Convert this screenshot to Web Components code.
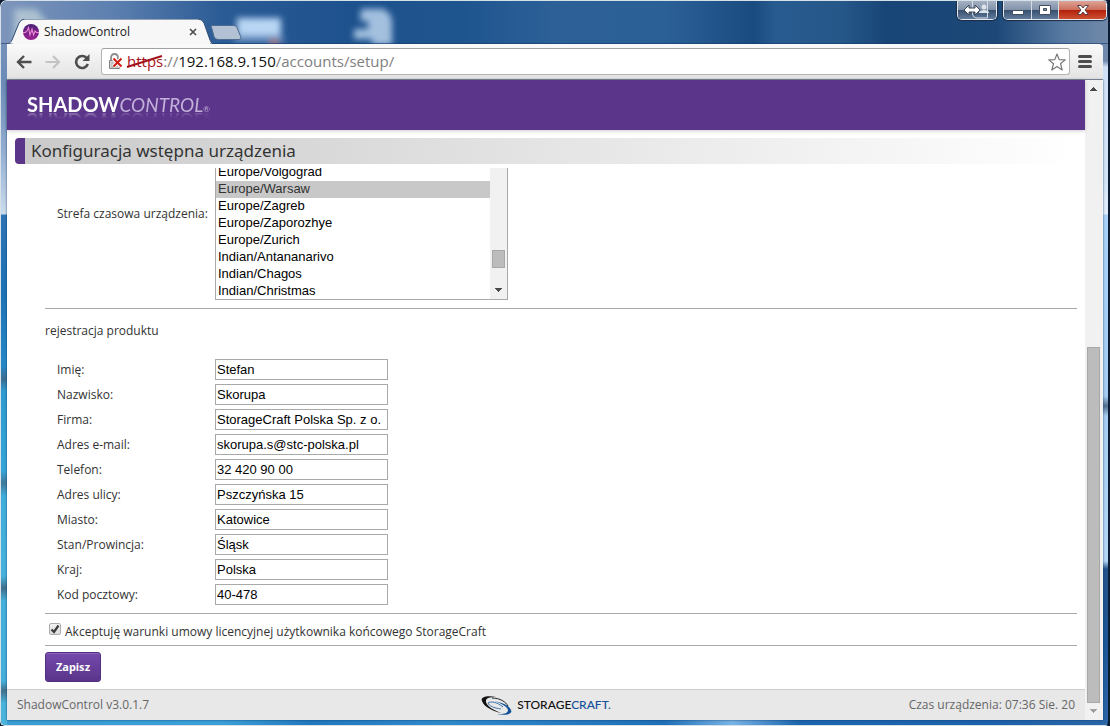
<!DOCTYPE html>
<html lang="pl">
<head>
<meta charset="utf-8">
<title>ShadowControl</title>
<style>
  html, body { height: 100%; margin: 0; }
  body { font-family: "Open Sans", "Trebuchet MS", sans-serif; font-size: 12px; line-height: 16px; color: #333; background: #0b1c33; overflow: hidden; }
</style>
</head>
<body>
<browser-window>
  <tab-strip slot="strip"></tab-strip>
  <tool-bar slot="toolbar"></tool-bar>
  <setup-page></setup-page>
</browser-window>

<script>
const define = (name, html, setup) => customElements.define(name, class extends HTMLElement {
  connectedCallback() {
    if (this.shadowRoot) return;
    const root = this.attachShadow({ mode: 'open' });
    const tpl = document.createElement('template');
    tpl.innerHTML = html;
    root.append(tpl.content.cloneNode(true));
    if (setup) setup(this, root);
  }
});

/* ---------- window frame ---------- */
define('browser-window', `
<style>
  :host { display: block; height: 100%; }
  .frame {
    box-sizing: border-box; height: 100%; display: flex; flex-direction: column; position: relative;
    border: 1px solid #d5e0e8; border-radius: 7px 7px 5px 5px; overflow: hidden;
    border-right: 2px solid #0b1c33;
    padding: 0 5px 5px 6px;
    background:
      linear-gradient(#7089ad 0, #7089ad 60px, #cfe0f5 66px, #d4e5f8 180px, #e4eef9 213px, #a9d1f6 214px, #a6cdf0 395px, #53708f 405px, #a6cdf0 415px, #b5d6f5 560px, #25528a 568px, #1e5796 640px, #2a66a8 100%) right / 6px 100% no-repeat,
      linear-gradient(#7d95bb 0, #6d8bb8 80px, #93aed0 150px, #cbdcec 213px, #2f74b5 214px, #1e72b4 290px, #2688c6 365px, #3d6d92 378px, #2f9bd0 390px, #36a5d6 470px, #41789a 482px, #40aedb 495px, #46b2dc 575px, #416f8e 587px, #45b0da 600px, #45afd9 680px, #44708c 690px, #49b3dc 702px) left / 6px 100% no-repeat,
      linear-gradient(90deg, #3a9ed5, #3b9fd8 20%, #2278bd 28%, #2f8acb 40%, #1f70b8 60%, #79b4e6 66%, #1c66ae 72%, #1d61aa 90%, #2a66a8) bottom / 100% 6px no-repeat,
      #1f548f;
  }
  .view { flex: 1; min-height: 0; display: flex; border-right: 1px solid #f4f4f4; box-shadow: 0 0 2px #0a2f5acc; background: #fff; position: relative; }
  .page { flex: 1; min-width: 0; }
  ::slotted(*) { position: relative; }
</style>
<div class="frame">
  <slot name="strip"></slot>
  <slot name="toolbar"></slot>
  <div class="view">
    <div class="page"><slot></slot></div>
    <scroll-bar start="250" size="355" dim></scroll-bar>
  </div>
</div>`);

/* ---------- classic scroll bar: start, size and rest are flex shares of the track ---------- */
define('scroll-bar', `
<style>
  :host { flex: none; width: 17px; background: #f1f1f1; display: flex; flex-direction: column; align-items: center; }
  svg { flex: none; display: block; width: 17px; height: 17px; fill: #4a4a4a; }
  :host([dim]) .down { fill: #a0a0a0; }
  :host([open-top]) .up { display: none; }
  .track { flex: 1; width: 13px; display: flex; flex-direction: column; }
  .thumb { box-sizing: border-box; background: #bcbcbc; border: 1px solid #a8a8a8; }
</style>
<svg class="up" viewBox="0 0 17 17" shape-rendering="crispEdges"><path d="M5 11h7L8.500 7z"/></svg>
<div class="track"><div class="before"></div><div class="thumb"></div><div class="after"></div></div>
<svg class="down" viewBox="0 0 17 17" shape-rendering="crispEdges"><path d="M5 6h7L8.500 10z"/></svg>`,
(host, root) => {
  const start = +host.getAttribute('start'), size = +host.getAttribute('size');
  const rest = +(host.getAttribute('rest') || 0);
  root.querySelector('.before').style.flex = start;
  root.querySelector('.thumb').style.flex = size;
  root.querySelector('.after').style.flex = rest;
});

/* ---------- title bar ---------- */
define('tab-strip', `
<style>
  :host { display: block; height: 43px; margin: 0 -5px 0 -6px; font: 12px/16px "Open Sans", "Segoe UI", sans-serif; color: #222; }
  .bar { height: 100%; position: relative; display: flex; justify-content: space-between; align-items: flex-start; }
  .wall { position: absolute; inset: 0; width: 100%; height: 100%; }
  .tabs { position: relative; display: flex; align-items: flex-end; height: 100%; padding-left: 6px; }
  .tab { position: relative; width: 206px; height: 25px; box-sizing: border-box; padding: 0 15px 0 16px; display: flex; align-items: center; gap: 5px; }
  .shape { position: absolute; left: 0; bottom: 0; }
  .tab > *:not(.shape) { position: relative; }
  .name { flex: 1; }
  button { all: unset; display: grid; place-items: center; }
  .close { width: 10px; height: 10px; }
  .new { width: 32px; height: 15px; margin: 0 0 4px -3px; }
  .controls { position: relative; display: flex; gap: 6px; padding-right: 1px; }
  .group { display: flex; box-sizing: border-box; height: 19px; border: 1px solid #e3e9ef; border-top: 0; border-radius: 0 0 5px 5px; overflow: hidden; box-shadow: 0 0 1px 1px #1b2c44; }
  .group button { height: 18px; background: linear-gradient(#a5b1c2 0, #8091a9 50%, #38506f 52%, #627b9b 100%); border-right: 1px solid #d5dce5; }
  .group button:last-child { border-right: 0; }
  .users { width: 38px; }
  .min { width: 27px; } .max { width: 26px; } .exit { width: 47px; }
  .group .exit { background: linear-gradient(#dda497 0, #cd6f5c 48%, #b3210c 52%, #cd5031 100%); }
</style>
<div class="bar">
  <svg class="wall" preserveAspectRatio="xMaxYMin slice" viewBox="0 0 1108 43">
    <defs>
      <linearGradient id="sky"><stop offset="0" stop-color="#7d95bb"/><stop offset=".1" stop-color="#5d80b0"/><stop offset=".2" stop-color="#2b5b95"/><stop offset=".32" stop-color="#1d518d"/><stop offset=".42" stop-color="#1f558f"/><stop offset=".5" stop-color="#2c6097"/><stop offset=".6" stop-color="#2b6097"/><stop offset=".68" stop-color="#1a4b80"/><stop offset=".7" stop-color="#285b90"/><stop offset=".76" stop-color="#265789"/><stop offset=".8" stop-color="#174576"/><stop offset=".9" stop-color="#1d4878"/><stop offset=".96" stop-color="#587aa2"/><stop offset="1" stop-color="#7089a9"/></linearGradient>
      <filter id="soft" x="-30%" y="-30%" width="160%" height="160%"><feGaussianBlur stdDeviation="3"/></filter>
    </defs>
    <rect width="1108" height="43" fill="url(#sky)"/>
    <g filter="url(#soft)">
      <path d="M14 8h22l12 14v25H14z" fill="#c5d5da" opacity=".7"/>
      <path d="M237 17h44v18h-44z" fill="#b8d6f4"/>
      <path d="M234 36h50v5h-50z" fill="#6c93c2"/>
      <circle cx="274" cy="42" r="5" fill="#a0707c"/>
      <path d="M361 8h22q9 4 9 14v22h-20v-6h-18v-10h14v-8h-8z" fill="#a3c0df"/>
    </g>
    <path d="M0 42.500h1108" stroke="#173d69" opacity=".6"/>
  </svg>
  <div class="tabs">
    <div class="tab">
      <svg class="shape" width="206" height="25" viewBox="0 0 206 25"><path d="M0 25c2 0 4-2 5-4L12 4q2-4 6-4h173q4 0 6 4l6 17q1 3 3 4z" fill="#f7f7f7" stroke="#304d74" stroke-width="1"/><path d="M7 24h196v1H4z" fill="#f7f7f7"/></svg>
      <svg width="16" height="16" viewBox="0 0 16 16"><defs><linearGradient id="pg" x2="0" y2="1"><stop stop-color="#4b2379"/><stop offset="1" stop-color="#9b2193"/></linearGradient></defs><circle cx="8" cy="8" r="8" fill="url(#pg)"/><path d="M0 8.500h2.500L4 7l1.500-3.500L7 11l2-6 1.500 6L12 7l1.500 1.500H16" fill="none" stroke="#ee86d5" stroke-width="1.100"/></svg>
      <span class="name">ShadowControl</span>
      <button class="close" aria-label="Zamknij kartę"><svg width="8" height="8" viewBox="0 0 8 8"><path d="M1 1l6 6M7 1L1 7" stroke="#4a4a4a" stroke-width="1.600"/></svg></button>
    </div>
    <button class="new" aria-label="Nowa karta"><svg width="32" height="15" viewBox="0 0 32 15"><path d="M1 .5h23q2 0 3 2l4 10q0 2-2 2H8q-3 0-4-3z" fill="#b2c1d4" stroke="#4d6a8f"/></svg></button>
  </div>
  <div class="controls">
    <div class="group"><button class="users" aria-label="Użytkownik"><svg width="38" height="18" viewBox="0 0 38 18"><path d="M14.500 0v12q0 5 5 5h10V0" fill="none" stroke="#d5dce5"/><circle cx="26" cy="6" r="2.500" fill="#dde3ea"/><path d="M21 12q0-3 5-3t5 3z" fill="#dde3ea"/><path d="M6 9l5-5v3h6V4l5 5-5 5v-3h-6v3z" fill="#fff" stroke="#3b4656"/></svg></button></div>
    <div class="group">
      <button class="min" aria-label="Minimalizuj"><svg width="14" height="14" viewBox="0 0 14 14"><path d="M1.500 7.500h11v4h-11z" fill="#fff" stroke="#434f61"/></svg></button>
      <button class="max" aria-label="Maksymalizuj"><svg width="14" height="12" viewBox="0 0 14 12"><path d="M1.500 1.500h11v9h-11zM5.500 4.500v2h3v-2z" fill="#fff" fill-rule="evenodd" stroke="#434f61"/></svg></button>
      <button class="exit" aria-label="Zamknij"><svg width="14" height="12" viewBox="0 0 14 12"><path d="M1.500 1.500h3.500l2 2.500 2-2.500h3.500L9 6l3.500 4.500H9L7 8l-2 2.500H1.500L5 6z" fill="#fff" stroke="#564049"/></svg></button>
    </div>
  </div>
</div>`);

/* ---------- navigation bar ---------- */
define('tool-bar', `
<style>
  :host { display: flex; box-sizing: border-box; height: 36px; align-items: center; padding: 0 8px 0 7px; background: linear-gradient(#fafafa, #e3e3e3); border-bottom: 1px solid #a09da5; border-radius: 0 4px 0 0; font: 15px/20px "Open Sans", "Segoe UI", sans-serif; }
  button { all: unset; display: grid; place-items: center; width: 20px; height: 20px; }
  .nav { display: flex; gap: 9px; }
  .omni { flex: 1; display: flex; align-items: center; box-sizing: border-box; height: 27px; margin: 0 5px 0 9px; padding: 0 2px 0 5px; border: 1px solid #b4b4b4; border-top-color: #a2a2a2; border-radius: 3px; background: #fff; gap: 3px; }
  .url { flex: 1; color: #808080; white-space: nowrap; padding-bottom: 2px; }
  .scheme { position: relative; color: #a5131b; }
  .scheme svg { position: absolute; left: -1px; top: 0; width: 38px; height: 20px; }
  .host { color: #111; }
</style>
<div class="nav">
  <button aria-label="Wstecz"><svg width="16" height="14" viewBox="0 0 16 14"><path d="M15.500 7H2M8 1L2 7l6 6" fill="none" stroke="#4e4e4e" stroke-width="2.400"/></svg></button>
  <button aria-label="Dalej"><svg width="16" height="14" viewBox="0 0 16 14"><path d="M.5 7H14M8 1l6 6-6 6" fill="none" stroke="#c3c3c3" stroke-width="2.200"/></svg></button>
  <button aria-label="Odśwież"><svg width="16" height="16" viewBox="0 0 16 16"><path d="M13 4.500A6 6 0 1 0 13.800 10" fill="none" stroke="#4e4e4e" stroke-width="2.600"/><path d="M15.500 0v7h-7z" fill="#4e4e4e"/></svg></button>
</div>
<div class="omni">
  <svg width="17" height="18" viewBox="0 0 17 18"><path d="M4 8V5q0-4 3.500-4T11 5v3" fill="none" stroke="#8e8e8e" stroke-width="1.800"/><path d="M2.500 7.500h10v8h-10z" fill="#d8d8d8" stroke="#808080"/><path d="M4 10h7M4 12h7M4 14h7" stroke="#aaa"/><path d="M6.500 5.500l8 8M14.500 5.500l-8 8" stroke="#fff" stroke-width="4"/><path d="M6.500 5.500l8 8M14.500 5.500l-8 8" stroke="#cf1d14" stroke-width="2"/></svg>
  <div class="url"><span class="scheme">https<svg viewBox="0 0 38 20"><path d="M1 16L36 5" stroke="#a5131b" stroke-width="2"/></svg></span>://<span class="host">192.168.9.150</span>/accounts/setup/</div>
  <button aria-label="Dodaj zakładkę"><svg width="18" height="18" viewBox="0 0 18 18"><path d="M9 1l2.200 5.600 6 .3-4.700 3.800L14.200 17 9 13.400 3.800 17l1.700-6.300L.8 6.900l6-.3z" fill="#fff" stroke="#777" stroke-width="1.200" stroke-linejoin="round"/></svg></button>
</div>
<button aria-label="Menu"><svg width="14" height="13" viewBox="0 0 14 13"><path d="M1.500 1.500h11M1.500 6.500h11M1.500 11.500h11" stroke="#4d4d4d" stroke-width="3" stroke-linecap="round"/></svg></button>`);

/* ---------- form row ---------- */
define('form-field', `
<style>
  :host { display: grid; grid-template-columns: 158px 1fr; align-items: center; padding-left: 12px; }
  input { box-sizing: border-box; width: 173px; height: 21px; margin: 0; padding: 1px 6px 1px 1px; border: 1px solid #a9a9a9; border-radius: 0; background: #fff; color: #000; font: 13px/17px "Liberation Sans", Arial, sans-serif; outline: 0; }
</style>
<label for="f"></label><input id="f" type="text">`,
(host, root) => {
  root.querySelector('label').textContent = host.getAttribute('label');
  root.querySelector('input').value = host.getAttribute('value');
});

/* ---------- time zone list ---------- */
define('zone-list', `
<style>
  :host { display: grid; grid-template-columns: 158px 1fr; padding-left: 12px; }
  label { align-self: start; padding-top: 42px; white-space: nowrap; }
  .box { display: flex; box-sizing: border-box; width: 293px; height: 136px; border: 1px solid #a9a9a9; border-top: 0; }
  select { flex: 1; min-width: 0; height: 135px; margin: 0; padding: 0; border: 0; border-radius: 0; outline: 0; overflow: hidden; background: #fff; color: #000; font: 13px/16px "Liberation Sans", Arial, sans-serif; }
  option { height: 17px; box-sizing: border-box; padding: 0 2px; }
  option:checked { background: #c8c8c8 linear-gradient(#c8c8c8, #c8c8c8); color: #323232; }
</style>
<label for="zone">Strefa czasowa urządzenia:</label>
<div class="box">
  <select id="zone" size="8">
    <option>Europe/Volgograd</option><option selected>Europe/Warsaw</option><option>Europe/Zagreb</option><option>Europe/Zaporozhye</option><option>Europe/Zurich</option><option>Indian/Antananarivo</option><option>Indian/Chagos</option><option>Indian/Christmas</option>
  </select>
  <scroll-bar start="87" size="17" rest="14" open-top></scroll-bar>
</div>`);

/* ---------- setup page ---------- */
define('setup-page', `
<style>
  :host { display: flex; flex-direction: column; height: 100%; background: #fff; }
  header { flex: none; height: 50px; box-sizing: border-box; padding: 11px 0 0 20px; background: #5a358a; box-shadow: 0 1px 4px #0003; }
  .logo { display: inline-block; font-family: Lato, sans-serif; font-size: 20px; line-height: 26px; color: #fff; -webkit-box-reflect: below -19px linear-gradient(transparent 50%, #fffa 90%); }
  .logo i { font-size: 19px; color: #c3b1da; }
  .logo small { font-size: 8px; color: #c3b1da; }
  h1 { flex: none; margin: 8px 8px 4px; height: 26px; padding-left: 6px; border-left: 10px solid #5a358a; border-radius: 4px 0 0 4px; background: linear-gradient(90deg, #cacaca, #fff); font-family: "Noto Sans", sans-serif; font-size: 17px; line-height: 26px; font-weight: 400; }
  main { flex: 1; min-height: 0; overflow: hidden; display: flex; flex-direction: column; justify-content: flex-end; padding: 0 8px 7px 38px; }
  form { display: block; }
  hr { margin: 8px 0 0; border: 0; border-top: 1px solid #a9a9a9; }
  h2 { margin: 14px 0 20px; font-size: 12px; line-height: 16px; font-weight: 400; }
  .fields { display: grid; gap: 4px; }
  .terms { display: flex; align-items: flex-end; gap: 4px; padding: 9px 0 0 4px; height: 17px; }
  .terms + hr { margin-top: 5px; }
  .tick { display: grid; align-self: start; }
  .tick > * { grid-area: 1 / 1; width: 12px; height: 12px; margin: 0; }
  input { appearance: none; box-sizing: border-box; border: 1px solid #adadad; border-radius: 2px; background: linear-gradient(#f2f2f2, #dcdcdc); }
  .tick svg { pointer-events: none; }
  .save { display: block; box-sizing: border-box; width: 56px; height: 30px; margin-top: 6px; padding: 0; border: 1px solid #52307f; border-radius: 3px; background: linear-gradient(#7549ad, #5a358a); box-shadow: inset 0 1px 0 #8a63bd; color: #fff; font: bold 11px/16px "Noto Sans", "Trebuchet MS", sans-serif; }
  footer { flex: none; display: grid; grid-template-columns: 1fr auto 1fr; align-items: center; box-sizing: border-box; height: 31px; padding: 0 10px; border-top: 1px solid #ccc; background: #e8e8e8; color: #666; }
  .time { text-align: right; }
  .brand { display: flex; align-items: center; gap: 5px; font-family: Lato, sans-serif; font-size: 12px; font-weight: 500; color: #111; }
  .brand b { font-weight: 500; color: #14509a; }
</style>
<header><div class="logo"><b>SHADOW</b><i>CONTROL</i><small>®</small></div></header>
<h1>Konfiguracja wstępna urządzenia</h1>
<main>
  <form>
    <zone-list></zone-list>
    <hr>
    <h2>rejestracja produktu</h2>
    <div class="fields">
      <form-field label="Imię:" value="Stefan"></form-field>
      <form-field label="Nazwisko:" value="Skorupa"></form-field>
      <form-field label="Firma:" value="StorageCraft Polska Sp. z o.o."></form-field>
      <form-field label="Adres e-mail:" value="skorupa.s@stc-polska.pl"></form-field>
      <form-field label="Telefon:" value="32 420 90 00"></form-field>
      <form-field label="Adres ulicy:" value="Pszczyńska 15"></form-field>
      <form-field label="Miasto:" value="Katowice"></form-field>
      <form-field label="Stan/Prowincja:" value="Śląsk"></form-field>
      <form-field label="Kraj:" value="Polska"></form-field>
      <form-field label="Kod pocztowy:" value="40-478"></form-field>
    </div>
    <hr>
    <div class="terms">
      <span class="tick"><input type="checkbox" id="terms" checked><svg viewBox="0 0 12 12"><path d="M2.500 6.500l2.500 2.500L9.500 2.500" fill="none" stroke="#3c3c3c" stroke-width="2.200"/></svg></span>
      <label for="terms">Akceptuję warunki umowy licencyjnej użytkownika końcowego StorageCraft</label>
    </div>
    <hr>
    <button class="save" type="button">Zapisz</button>
  </form>
</main>
<footer>
  <span>ShadowControl v3.0.1.7</span>
  <span class="brand"><svg width="31" height="19" viewBox="0 0 31 19"><path d="M15 1C6-1-1 1 1 5c2 6 11 10 19 12C12 14 6 10 5 6c-1-4 4-5 10-5z" fill="#111"/><path d="M11 2c8 0 14 4 16 8" fill="none" stroke="#222" stroke-width="1"/><path d="M16 18c9 2 16 0 14-4C28 9 20 6 12 5c9 2 14 6 15 9 0 4-5 4-11 4z" fill="#14509a"/><path d="M20 13C13 12 8 10 7 7c3-2 9-1 15 4" fill="none" stroke="#3f74ae" stroke-width="1"/></svg><span>STORAGE<b>CRAFT.</b></span></span>
  <span class="time">Czas urządzenia: 07:36 Sie. 20</span>
</footer>`);
</script>
</body>
</html>
